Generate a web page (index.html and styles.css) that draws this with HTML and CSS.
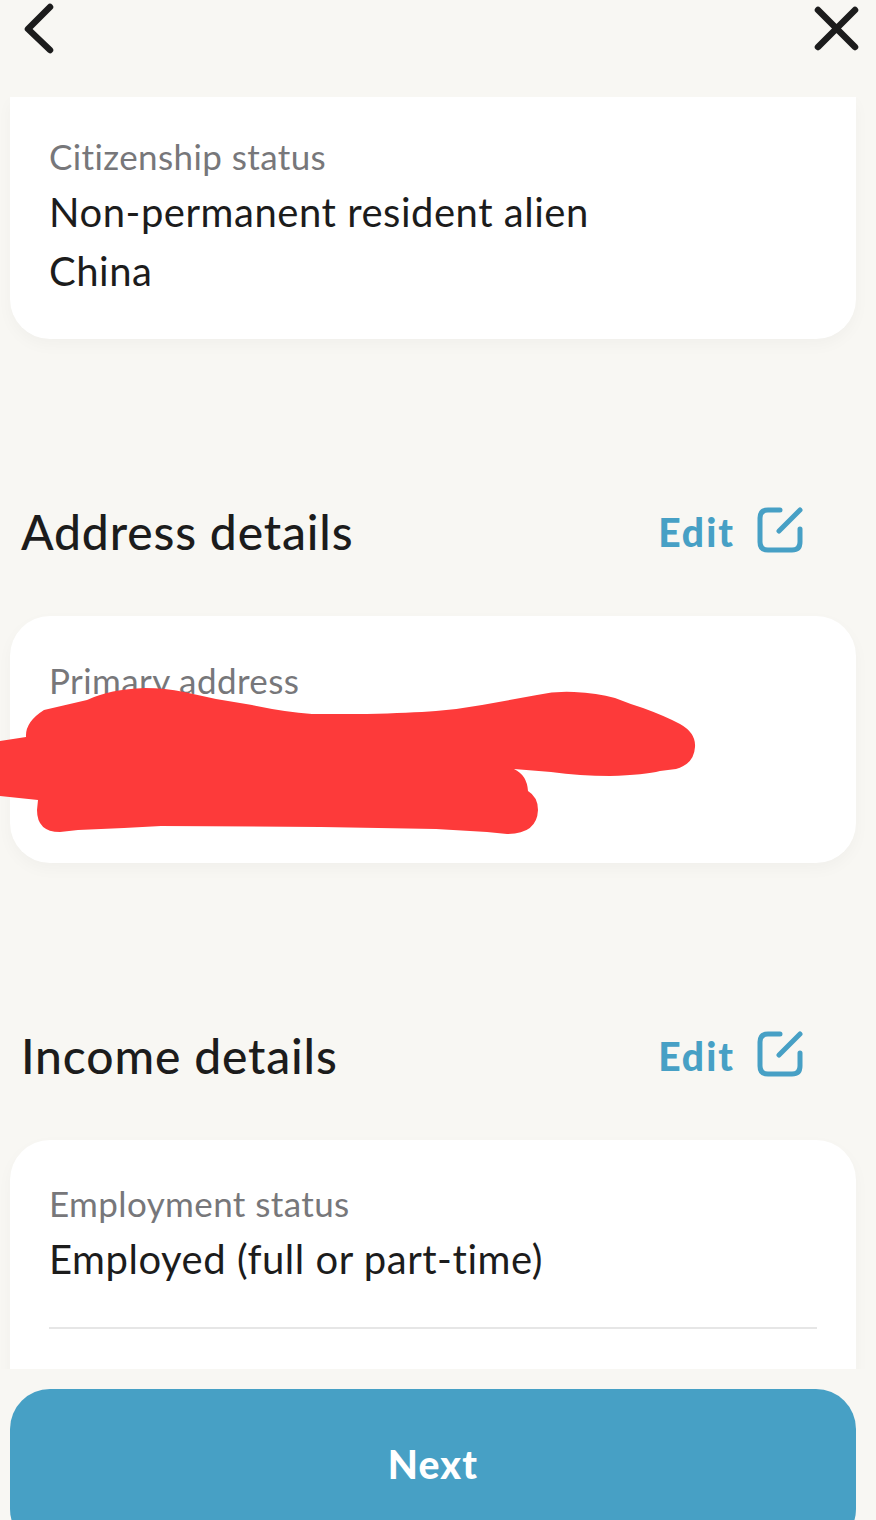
FILE: index.html
```html
<!DOCTYPE html>
<html lang="en">

<head>
    <meta charset="UTF-8">
    <meta name="viewport" content="width=device-width, initial-scale=1.0">
    <title>Review details</title>
    <link rel="stylesheet" href="styles.css">
</head>

<body>
    <div class="screen">
        <!-- top bar -->
        <div class="top-bar">
            <svg class="back-icon" width="34" height="56" viewBox="0 0 34 56">
                <path d="M28 7 L6 29 L28 50"></path>
            </svg>
            <svg class="close-icon" width="50" height="50" viewBox="0 0 50 50">
                <path d="M8 7 L45 44 M45 7 L8 44"></path>
            </svg>
        </div>

        <div class="scroll-area">
            <div class="card card-first">
                <p class="label">Citizenship status</p>
                <p class="value">Non-permanent resident alien</p>
                <p class="value">China</p>
            </div>

            <div class="section-head">
                <h2>Address details</h2>
                <a class="edit">Edit
                    <svg class="edit-icon" width="46" height="46" viewBox="0 0 46 46">
                        <path d="M23 3 H11 Q3 3 3 11 V35 Q3 43 11 43 H35 Q43 43 43 35 V22"></path>
                        <path d="M22 24 L43 3"></path>
                    </svg>
                </a>
            </div>

            <div class="card card-address">
                <p class="label">Primary address</p>
            </div>

            <div class="section-head">
                <h2>Income details</h2>
                <a class="edit">Edit
                    <svg class="edit-icon" width="46" height="46" viewBox="0 0 46 46">
                        <path d="M23 3 H11 Q3 3 3 11 V35 Q3 43 11 43 H35 Q43 43 43 35 V22"></path>
                        <path d="M22 24 L43 3"></path>
                    </svg>
                </a>
            </div>

            <div class="card card-last">
                <p class="label">Employment status</p>
                <p class="value">Employed (full or part-time)</p>
                <div class="divider"></div>
            </div>
        </div>

        <button class="next-btn">Next</button>

        <!-- red scribble drawn over the address -->
        <svg class="scribble" width="876" height="1520" viewBox="0 0 876 1520">
            <path d="M0 741 L26 737 Q25 722 44 710 L87 700 Q110 689 145 688 Q165 688 184 692 L216 699 L252 705 Q285 712 312 714 L367 714 Q410 713 436 711 Q460 709 482 705 L537 695 Q555 691 574 692 Q597 693 615 698 Q630 704 643 708 Q665 716 680 724 Q696 733 695 747 Q694 764 676 769 L660 771 Q645 775 610 776 Q580 776 551 772 L514 769 Q527 775 528 791 Q538 797 538 810 Q537 834 507 834 L487 832 L436 829 L321 827 L161 826 L124 828 L78 830 L60 832 Q37 832 37 810 L38 800 L0 796 Z"></path>
        </svg>
    </div>
</body>

</html>
```

FILE: styles.css
```css
* {
    box-sizing: border-box;
}

body {
    margin: 0;
    background-color: #f8f7f3;
    font-family: Lato, "Open Sans", sans-serif;
    color: #1c1c1c;
}

.screen {
    position: relative;
    height: 1520px;
    overflow: hidden;
}

p {
    margin: 0;
}

/* top bar */
.top-bar {
    display: flex;
    justify-content: space-between;
    align-items: flex-start;
    height: 97px;
    padding: 0 16px 0 22px;
}

.top-bar svg {
    fill: none;
    stroke: #1c1c1c;
    stroke-width: 6.5;
    stroke-linecap: round;
    stroke-linejoin: round;
}

.close-icon {
    margin-top: 3px;
}

/* scrolling part */
.scroll-area {
    height: 1272px;
    overflow: hidden;
    padding: 0 20px 0 10px;
}

.card {
    background-color: #fff;
    border-radius: 40px;
    padding: 0 39px;
    box-shadow: 0 6px 16px rgba(0, 0, 0, 0.03);
}

.card-first {
    height: 242px;
    padding-top: 38px;
    border-radius: 0 0 40px 40px;
}

.card-address {
    height: 247px;
    padding-top: 43px;
}

.card-last {
    height: 240px;
    padding-top: 42px;
    border-radius: 40px 40px 0 0;
}

.label {
    font-size: 35px;
    line-height: 42px;
    letter-spacing: 0.4px;
    color: #77777a;
}

.value {
    font-size: 40px;
    line-height: 59px;
    letter-spacing: 0.53px;
}

.label + .value {
    margin-top: 6px;
}

.divider {
    height: 2px;
    margin-top: 38px;
    background-color: #e6e6e6;
}

/* section headings */
.section-head {
    display: flex;
    justify-content: space-between;
    align-items: center;
    height: 277px;
    padding: 108px 53px 0 11px;
}

.section-head h2 {
    margin: 0;
    font-size: 48px;
    font-weight: 500;
    letter-spacing: 0.85px;
}

.edit {
    display: flex;
    align-items: center;
    gap: 22px;
    font-size: 39px;
    font-weight: 900;
    letter-spacing: 2px;
    color: #47a0c5;
}

.edit-icon {
    fill: none;
    stroke: #47a0c5;
    stroke-width: 5;
    stroke-linecap: round;
    stroke-linejoin: round;
    margin-top: -4px;
}

/* bottom button */
.next-btn {
    display: block;
    width: 846px;
    height: 160px;
    margin: 20px 0 0 10px;
    padding-bottom: 12px;
    border: none;
    border-radius: 40px;
    background-color: #47a0c5;
    color: #fff;
    font-family: inherit;
    font-size: 39px;
    font-weight: 900;
    letter-spacing: 1.2px;
}

.scribble {
    position: absolute;
    top: 0;
    left: 0;
    fill: #fd3a3a;
}
```
